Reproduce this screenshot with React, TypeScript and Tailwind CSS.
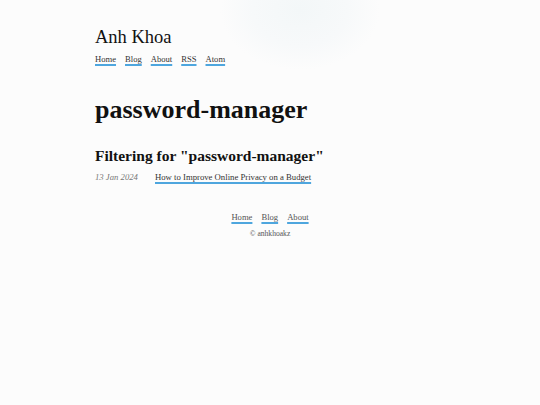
const serif = "font-['Liberation_Serif','DejaVu_Serif',serif]"

const linkClass =
  'text-[#333] underline decoration-[#4ea6de] decoration-[1.5px] underline-offset-[2px]'

const navItems = ['Home', 'Blog', 'About', 'RSS', 'Atom']
const footerItems = ['Home', 'Blog', 'About']

export default function App() {
  return (
    <div
      className={`${serif} min-h-[405px] w-full bg-[#fcfcfc] bg-[radial-gradient(ellipse_80px_60px_at_300px_10px,#f3f7f8_0%,#f7f9fa_60%,transparent_100%)] text-[#111]`}
    >
      <div className="mx-auto w-[350px] pt-[25px]">
        {/* Header */}
        <header>
          <h1 className="text-[18.5px] leading-[24px] font-normal">Anh Khoa</h1>
          <nav className="mt-[4px] flex gap-[9px] text-[8.6px] leading-[12px]">
            {navItems.map((item) => (
              <a key={item} href="#" className={linkClass}>
                {item}
              </a>
            ))}
          </nav>
        </header>

        {/* Tag page */}
        <main className="mt-[28px]">
          <h1 className="text-[26px] leading-[34px] font-bold">password-manager</h1>
          <h2 className="mt-[18px] text-[15.5px] leading-[22px] font-bold">
            Filtering for &quot;password-manager&quot;
          </h2>
          <ul className="mt-[3px]">
            <li className="flex items-baseline text-[8.7px] leading-[14px]">
              <span className="w-[60px] italic text-[#777]">13 Jan 2024</span>
              <a href="#" className={linkClass}>
                How to Improve Online Privacy on a Budget
              </a>
            </li>
          </ul>
        </main>

        {/* Footer */}
        <footer className="mt-[26px] flex flex-col items-center">
          <nav className="flex gap-[9px] text-[8.6px] leading-[14px]">
            {footerItems.map((item) => (
              <a key={item} href="#" className={`${linkClass} text-[#555]`}>
                {item}
              </a>
            ))}
          </nav>
          <p className="mt-[5px] text-[7.6px] leading-[10px] text-[#555]">© anhkhoakz</p>
        </footer>
      </div>
    </div>
  )
}
